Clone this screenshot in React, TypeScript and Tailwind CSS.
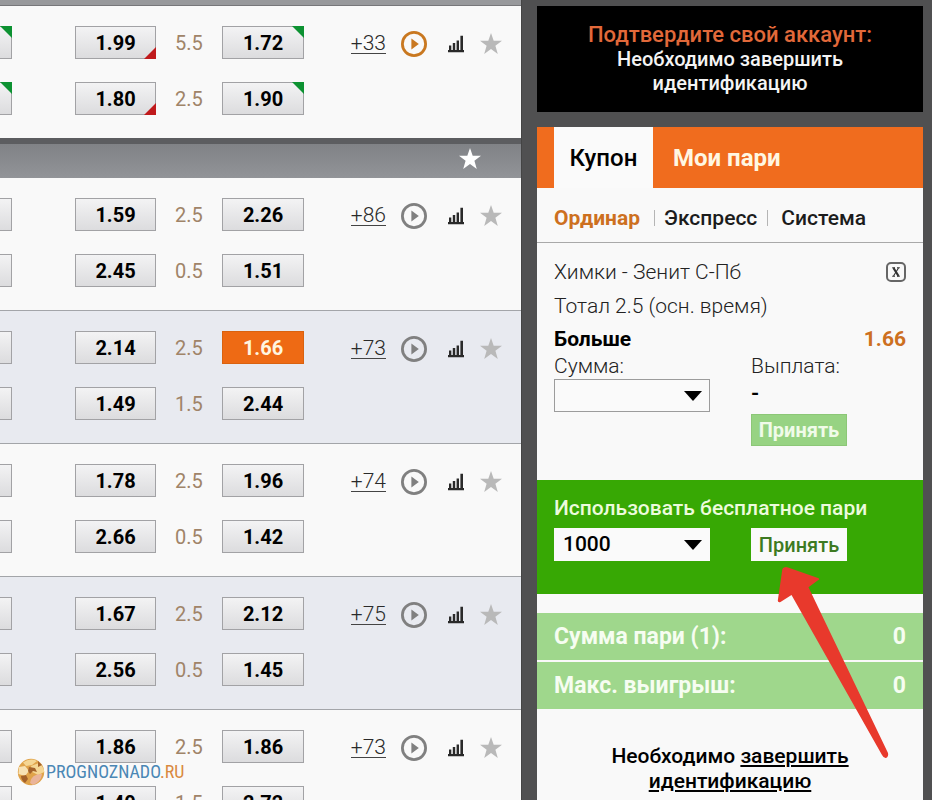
import React from 'react';
import clsx from 'clsx';

type Mark = 'up' | 'down';

type Odd = {
  value: string;
  mark?: Mark;
  selected?: boolean;
};

type Line = {
  under: Odd;
  total: string;
  over: Odd;
  edgeMark?: Mark;
};

type Match = {
  more: string;
  live?: boolean;
  tinted?: boolean;
  lines: Line[];
};

const liveMatch: Match = {
  more: '+33',
  live: true,
  lines: [
    { under: { value: '1.99', mark: 'down' }, total: '5.5', over: { value: '1.72', mark: 'up' }, edgeMark: 'up' },
    { under: { value: '1.80', mark: 'down' }, total: '2.5', over: { value: '1.90', mark: 'up' }, edgeMark: 'up' },
  ],
};

const matches: Match[] = [
  {
    more: '+86',
    lines: [
      { under: { value: '1.59' }, total: '2.5', over: { value: '2.26' } },
      { under: { value: '2.45' }, total: '0.5', over: { value: '1.51' } },
    ],
  },
  {
    more: '+73',
    tinted: true,
    lines: [
      { under: { value: '2.14' }, total: '2.5', over: { value: '1.66', selected: true } },
      { under: { value: '1.49' }, total: '1.5', over: { value: '2.44' } },
    ],
  },
  {
    more: '+74',
    lines: [
      { under: { value: '1.78' }, total: '2.5', over: { value: '1.96' } },
      { under: { value: '2.66' }, total: '0.5', over: { value: '1.42' } },
    ],
  },
  {
    more: '+75',
    tinted: true,
    lines: [
      { under: { value: '1.67' }, total: '2.5', over: { value: '2.12' } },
      { under: { value: '2.56' }, total: '0.5', over: { value: '1.45' } },
    ],
  },
  {
    more: '+73',
    lines: [
      { under: { value: '1.86' }, total: '2.5', over: { value: '1.86' } },
      { under: { value: '1.40' }, total: '1.5', over: { value: '2.72' } },
    ],
  },
];

const StarIcon: React.FC<{ className?: string }> = ({ className }) => (
  <svg viewBox="0 0 22 21" className={className} fill="currentColor" aria-hidden="true">
    <path d="M11 0l2.7 7.7 8.3.1-6.6 4.9L17.8 21 11 16l-6.8 5 2.4-8.3L0 7.8l8.3-.1z" />
  </svg>
);

const PlayIcon: React.FC = () => (
  <svg viewBox="0 0 28 28" className="h-7 w-7" aria-hidden="true">
    <circle cx="14" cy="14" r="11.6" fill="none" stroke="currentColor" strokeWidth="2.8" />
    <path d="M11.4 8.6l7.4 5.4-7.4 5.4z" fill="currentColor" />
  </svg>
);

const StatsIcon: React.FC = () => (
  <svg viewBox="0 0 16 18" className="h-[18px] w-4" fill="currentColor" aria-hidden="true">
    <path d="M0 15h16v2.200H0zM1 10.600h2.300V16H1zM4.800 8h2.400v8H4.800zM8.600 5.400H11V16H8.600zM12.400.8h2.600V16h-2.600z" />
  </svg>
);

const CornerMark: React.FC<{ mark: Mark }> = ({ mark }) => (
  <svg
    viewBox="0 0 12 12"
    className={clsx('absolute -right-px h-3 w-3', mark === 'up' ? '-top-px text-[#0d9232]' : '-bottom-px text-[#c01a1c]')}
    fill="currentColor"
    aria-hidden="true"
  >
    <path d={mark === 'up' ? 'M0 0h12v12z' : 'M12 0v12H0z'} />
  </svg>
);

const OddButton: React.FC<{ odd: Odd }> = ({ odd }) => (
  <button
    type="button"
    className={clsx(
      'relative h-[33px] border text-xl leading-none font-bold',
      odd.selected
        ? 'border-[#d9620f] bg-[#ee6a14] text-[#fff6e0]'
        : 'border-[#a2a2a5] bg-linear-to-b from-[#f3f3f4] to-[#dcdcde] text-black'
    )}
  >
    {odd.value}
    {odd.mark && <CornerMark mark={odd.mark} />}
  </button>
);

const MatchRow: React.FC<{ match: Match }> = ({ match }) => (
  <div className={clsx('flex justify-between pt-5 pb-[23px]', match.tinted ? 'bg-[#e8eaf0]' : 'bg-[#f9f9f9]')}>
    <div className="flex flex-col gap-[23px]">
      {match.lines.map((line) => (
        <div key={line.under.value} className="grid grid-cols-[12px_81px_66px_82px] items-center">
          <div className="relative h-[33px] border border-l-0 border-[#a2a2a5] bg-linear-to-b from-[#f3f3f4] to-[#dcdcde]">
            {line.edgeMark && <CornerMark mark={line.edgeMark} />}
          </div>
          <div className="col-span-3 ml-[63px] grid grid-cols-[81px_66px_82px] items-center">
            <OddButton odd={line.under} />
            <span className="text-center text-xl leading-none font-normal text-[#a08468]">{line.total}</span>
            <OddButton odd={line.over} />
          </div>
        </div>
      ))}
    </div>

    <div className="flex h-[35px] items-center pr-[19px] text-[#2a2a2a]">
      <a href="#more" className="mr-[14px] border-b border-[#444] text-[21px] leading-5 font-light">
        {match.more}
      </a>
      <button type="button" aria-label="Трансляция" className={clsx('mr-5', match.live ? 'text-[#c97820]' : 'text-[#808080]')}>
        <PlayIcon />
      </button>
      <button type="button" aria-label="Статистика" className="mr-4">
        <StatsIcon />
      </button>
      <button type="button" aria-label="В избранное" className="text-[#b9b9b9]">
        <StarIcon className="h-[21px] w-[22px]" />
      </button>
    </div>
  </div>
);

const AmountSelect: React.FC<{ id: string; value: string; className: string }> = ({ id, value, className }) => (
  <div className="relative w-[156px]">
    <select
      id={id}
      defaultValue={value}
      className={clsx('h-[33px] w-full appearance-none bg-[#fafafa] px-2 text-[21px] leading-none font-medium text-black', className)}
    >
      <option value={value}>{value}</option>
    </select>
    <svg viewBox="0 0 18 10" className="pointer-events-none absolute top-3 right-2 h-[10px] w-[18px]" aria-hidden="true">
      <path d="M0 0h18l-9 10z" fill="#000" />
    </svg>
  </div>
);

const Odds: React.FC = () => (
  <main className="min-w-0 flex-1 border-r border-[#444]">
    <div className="h-[6px] border-b border-[#77777a] bg-[#98999c]" />
    <MatchRow match={liveMatch} />
    <div className="h-[6px] bg-[#5c5d60]" />
    <div className="flex h-[34px] items-start justify-end bg-linear-to-b from-[#808286] to-[#929498] pt-1 pr-10">
      <button type="button" aria-label="Лига в избранное" className="text-white">
        <StarIcon className="h-[21px] w-[22px]" />
      </button>
    </div>
    <div className="divide-y divide-[#a3a5a9]">
      {matches.map((match, index) => (
        <MatchRow key={index} match={match} />
      ))}
    </div>
  </main>
);

const BetSlip: React.FC = () => (
  <aside className="flex w-[386px] shrink-0 flex-col pt-[6px]">
    <div className="mb-[15px] bg-black pt-[17px] pb-[17px] text-center text-xl leading-6 font-medium text-[#f4f4f4]">
      <p className="text-[22px] text-[#e2693a]">Подтвердите свой аккаунт:</p>
      <p>Необходимо завершить</p>
      <p>идентификацию</p>
    </div>

    <div className="flex h-[61px] bg-[#f06c1e] pl-[17px] text-2xl">
      <button type="button" className="w-[99px] bg-[#fafafa] font-medium text-black">
        Купон
      </button>
      <button type="button" className="px-5 font-bold text-[#fff7e2]">
        Мои пари
      </button>
    </div>

    <div className="flex-1 bg-[#f9f9f9]">
      <div className="flex h-[55px] items-center border-b border-[#a9a9a9] pt-[6px] pl-[17px] text-[21px] leading-6 font-medium text-[#1c1c1c]">
        <button type="button" className="pr-[14px] font-bold text-[#cd701f]">
          Ординар
        </button>
        <button type="button" className="relative px-[10px]">
          <span className="absolute top-1 left-0 h-4 w-px bg-[#b5b5b5]" />
          Экспресс
        </button>
        <button type="button" className="relative px-[14px]">
          <span className="absolute top-1 left-0 h-4 w-px bg-[#b5b5b5]" />
          Система
        </button>
      </div>

      <section className="h-[237px] px-[17px] pt-[15px] text-[21px] leading-7 font-light text-[#222]">
        <div className="flex items-center justify-between">
          <p>Химки - Зенит С-Пб</p>
          <button
            type="button"
            aria-label="Удалить"
            className="flex h-5 w-5 items-center justify-center rounded-[5px] border-2 border-[#666] text-[#333]"
          >
            <svg viewBox="0 0 10 10" className="h-[10px] w-[10px]" fill="none" stroke="currentColor" aria-hidden="true">
              <path d="M2.500 1l5 8" strokeWidth="2.2" />
              <path d="M7.500 1l-5 8M1.200.8h2.800M6 .8h2.800M1.200 9.200H4M6 9.200h2.800" strokeWidth="1.1" />
            </svg>
          </button>
        </div>
        <p className="mt-[6px]">Тотал 2.5 (осн. время)</p>
        <div className="mt-[5px] flex justify-between font-bold">
          <p className="text-black">Больше</p>
          <p className="text-[#cd701f]">1.66</p>
        </div>
        <div className="flex">
          <div className="w-[197px]">
            <label htmlFor="amount" className="block leading-[26px]">
              Сумма:
            </label>
            <AmountSelect id="amount" value="" className="border border-[#9c9c9c]" />
          </div>
          <div>
            <p className="leading-[26px]">Выплата:</p>
            <p className="font-bold text-black">-</p>
            <button type="button" className="mt-[7px] h-8 w-24 border border-[#8cc777] bg-[#97d383] text-xl leading-none font-bold text-[#f0fbe9]">
              Принять
            </button>
          </div>
        </div>
      </section>

      <section className="relative h-[114px] bg-[#37a804] px-[17px] pt-4">
        <label htmlFor="freebet" className="block text-[21px] leading-6 font-medium text-[#ecfbdc]">
          Использовать бесплатное пари
        </label>
        <div className="mt-2 flex">
          <div className="w-[197px]">
            <AmountSelect id="freebet" value="1000" className="border border-[#fafafa]" />
          </div>
          <button type="button" className="h-[33px] w-24 bg-[#fafafa] text-xl leading-none font-medium text-[#3d7a22]">
            Принять
          </button>
        </div>
        <svg
          viewBox="776 566 114 194"
          className="pointer-events-none absolute top-[86px] right-[33px] h-[194px] w-[114px]"
          fill="#e8392c"
          aria-hidden="true"
        >
          <path d="M784 567.500q2-.8 4 0l30 10.500q2.500 1 0 2.300l-9.500 7L888 753q.8 3.500-2 5-2.200.4-4-3L791.500 595l-11 7q-2.700 1-2.700-1.500l4.500-31q.4-1.600 1.700-2z" />
        </svg>
      </section>

      <dl className="pt-[19px] text-[23px] font-bold text-[#f6fdf1]">
        <div className="flex h-[47px] items-center justify-between bg-[#9fd78c] px-[17px] pt-[2px]">
          <dt>Сумма пари (1):</dt>
          <dd>0</dd>
        </div>
        <div className="mt-[2px] flex h-[47px] items-center justify-between bg-[#9fd78c] px-[17px] pt-[2px]">
          <dt>Макс. выигрыш:</dt>
          <dd>0</dd>
        </div>
      </dl>

      <p className="pt-[35px] text-center text-[21px] leading-[25px] font-medium text-black">
        Необходимо{' '}
        <a href="#identify" className="underline decoration-2 underline-offset-2">
          завершить
          <br />
          идентификацию
        </a>
      </p>
    </div>
  </aside>
);

const Watermark: React.FC = () => (
  <div className="absolute bottom-[14px] left-[17px] flex items-center gap-px">
    <svg viewBox="0 0 28 28" className="h-7 w-7" aria-hidden="true">
      <circle cx="14" cy="14" r="13.200" fill="#e0a34a" />
      <path d="M6 4.500q7-5 14-1.500l-5 4-6 1zM14 8l8-3q5 4 5.200 9l-6 3-6-3z" fill="#f5d694" />
      <path d="M2 9l6-1 4 5-4 5-6.500-2z" fill="#f8e2b4" />
      <path d="M12 9l6 1 2 4-4-1-3 3-2-3zM4 18l5-1 2 4-3 4q-4-3-4-7zM21 3l4 4-4 2z" fill="#a4622a" />
      <path d="M13 25q1-9 12-9-1 8-9 11z" fill="#eab49a" />
    </svg>
    <span className="font-['Liberation_Sans_Narrow','Roboto_Condensed','Roboto',sans-serif] text-lg leading-6 text-[#4a87b5]">
      PROGNOZNADO<span className="text-[#d9893f]">.RU</span>
    </span>
  </div>
);

export default function App() {
  return (
    <div className="relative flex h-screen gap-[15px] overflow-hidden bg-[#505051] pr-[9px] font-['Roboto',sans-serif]">
      <Odds />
      <BetSlip />
      <Watermark />
    </div>
  );
}
